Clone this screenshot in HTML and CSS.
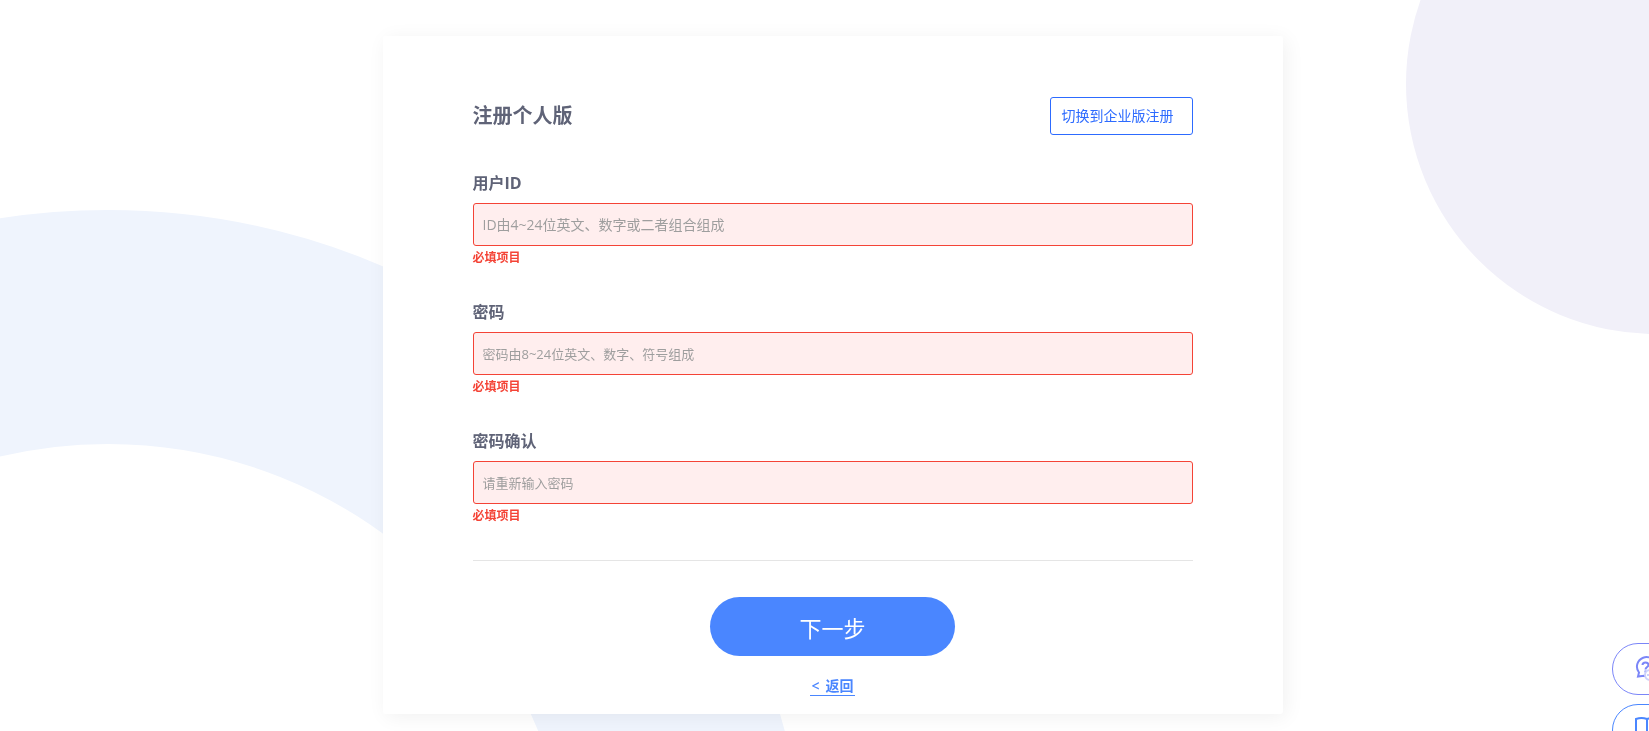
FILE: index.html
```html
<!DOCTYPE html>
<html lang="zh-CN">
<head>
    <meta charset="UTF-8">
    <meta name="viewport" content="width=device-width, initial-scale=1">
    <title>注册个人版</title>
    <link rel="stylesheet" href="styles.css">
</head>
<body>
    <div class="bg">
        <div class="bg-ring"></div>
        <div class="bg-circle"></div>
    </div>

    <main class="page">
        <div class="container">
            <div class="header">
                <h1>注册个人版</h1>
                <a href="#" class="switch-btn">切换到企业版注册</a>
            </div>
            <form>
                <div class="fields">
                    <div class="form-group">
                        <label for="user-id">用户ID</label>
                        <input type="text" id="user-id" placeholder="ID由4~24位英文、数字或二者组合组成">
                        <p class="error">必填项目</p>
                    </div>
                    <div class="form-group">
                        <label for="password">密码</label>
                        <input type="password" id="password" placeholder="密码由8~24位英文、数字、符号组成">
                        <p class="error">必填项目</p>
                    </div>
                    <div class="form-group">
                        <label for="password-confirm">密码确认</label>
                        <input type="password" id="password-confirm" placeholder="请重新输入密码">
                        <p class="error">必填项目</p>
                    </div>
                </div>
                <div class="actions">
                    <button type="submit" class="submit-btn">下一步</button>
                    <a href="#" class="back-link"><span>&lt;</span> <span>返回</span></a>
                </div>
            </form>
        </div>
    </main>

    <div class="side-menu">
        <a href="#" class="side-btn side-btn--help">
            <svg width="28" height="28" viewBox="0 0 28 28" fill="none" stroke="currentColor" stroke-width="2">
                <path d="M5 17.500A9.500 9.500 0 1 1 10 20.800L4 21.500Z"/>
                <path d="M8.500 10C8.500 6.500 14.500 6.500 14.500 10C14.500 12 11.500 12 11.500 14.500"/>
                <path d="M11.500 15.500V17.500"/>
                <circle cx="16" cy="20" r="5" fill="#fff" stroke="#ccd1fb"/>
                <path d="M13 20H19" stroke="#ccd1fb"/>
            </svg>
        </a>
        <a href="#" class="side-btn side-btn--guide">
            <svg width="28" height="28" viewBox="0 0 28 28" fill="none" stroke="currentColor" stroke-width="2">
                <path d="M2 3C5 2 10 2 13 3C16 2 21 2 24 3V22C21 21 16 21 13 23C10 21 5 21 2 22ZM13 3V23"/>
            </svg>
        </a>
    </div>
</body>
</html>
```

FILE: styles.css
```css
* {
    box-sizing: border-box;
}

body {
    font-family: "Open Sans", "Noto Sans CJK SC", sans-serif;
    color: #5f6377;
    background-color: #fff;
    margin: 0;
}

h1,
p {
    margin: 0;
}

/* Background shapes */
.bg {
    position: fixed;
    inset: 0;
    overflow: hidden;
    z-index: -1;
}

.bg-ring {
    position: absolute;
    left: -592px;
    top: 210px;
    width: 1400px;
    height: 1400px;
    border: 234px solid #eff4fd;
    border-radius: 50%;
}

.bg-circle {
    position: absolute;
    right: -257px;
    top: -166px;
    width: 500px;
    height: 500px;
    background-color: #f1f0f9;
    border-radius: 50%;
}

.page {
    padding: 36px 0 17px 16px;
}

.container {
    max-width: 900px;
    margin: 0 auto;
    padding: 61px 90px 18px;
    background-color: #fff;
    border-radius: 3px;
    box-shadow: 3px 3px 20px rgba(0, 0, 0, 0.06);
}

.header {
    display: flex;
    align-items: center;
    justify-content: space-between;
    margin-bottom: 36px;
}

.header h1 {
    font-size: 20px;
    line-height: 30px;
    font-weight: bold;
}

.switch-btn {
    padding: 0 18px 0 11px;
    border: 1px solid #2d6bff;
    border-radius: 3px;
    color: #2d6bff;
    font-size: 14px;
    line-height: 36px;
    text-decoration: none;
}

.fields {
    display: grid;
    gap: 30px;
}

.form-group label {
    display: block;
    margin-bottom: 8px;
    font-size: 16px;
    line-height: 24px;
    font-weight: bold;
}

.form-group input {
    display: block;
    width: 100%;
    height: 43px;
    padding: 0 9px;
    border: 1px solid #f44336;
    border-radius: 3px;
    background-color: #ffeeee;
    color: #5f6377;
    font-family: inherit;
    font-size: 14px;
}

.form-group input[type="password"] {
    font-size: 13px;
}

.form-group input::placeholder {
    color: #9e9e9e;
}

.form-group .error {
    color: #f44336;
    font-size: 12px;
    line-height: 24px;
    font-weight: bold;
}

.actions {
    display: flex;
    flex-direction: column;
    align-items: center;
    gap: 20px;
    margin-top: 32px;
    padding-top: 36px;
    border-top: 1px solid #e5e5e5;
}

.submit-btn {
    width: 245px;
    height: 59px;
    border: none;
    border-radius: 30px;
    background-color: #4a86ff;
    color: #fff;
    font-family: inherit;
    font-size: 22px;
    cursor: pointer;
}

.submit-btn:hover {
    background-color: #2d6bff;
}

.back-link {
    display: flex;
    gap: 6px;
    padding: 0 1px;
    border-bottom: 1px solid #4a86ff;
    color: #4a86ff;
    font-size: 14px;
    line-height: 19px;
    font-weight: 600;
    text-decoration: none;
}

/* Help buttons, partly off the right edge */
.side-menu {
    position: fixed;
    right: -63px;
    bottom: -25px;
    display: flex;
    flex-direction: column;
    gap: 9px;
}

.side-btn {
    display: flex;
    align-items: center;
    width: 100px;
    height: 52px;
    padding-left: 21px;
    border: 1px solid;
    border-radius: 26px;
    background-color: #fff;
}

.side-btn--help {
    color: #7b86f8;
}

.side-btn--guide {
    color: #4a86ff;
}
```
